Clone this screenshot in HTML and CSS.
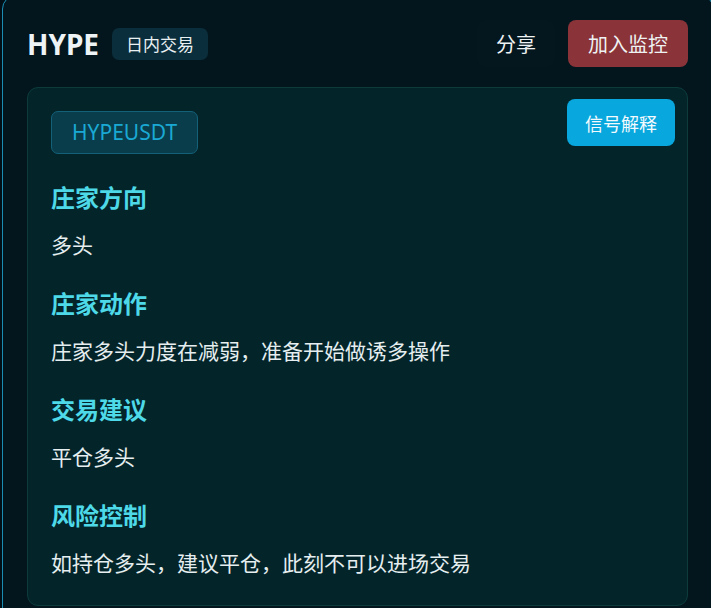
FILE: index.html
```html
<!DOCTYPE html>
<html lang="zh">
<head>
<meta charset="utf-8">
<link rel="stylesheet" href="styles.css">
</head>
<body>
<div class="panel">
  <header class="head">
    <div class="title">
      <span class="coin">HYPE</span>
      <span class="mode">日内交易</span>
    </div>
    <div class="actions">
      <button class="btn share">分享</button>
      <button class="btn watch">加入监控</button>
    </div>
  </header>
  <section class="card">
    <button class="explain">信号解释</button>
    <span class="pair">HYPEUSDT</span>
    <div class="item">
      <h3>庄家方向</h3>
      <p>多头</p>
    </div>
    <div class="item">
      <h3>庄家动作</h3>
      <p>庄家多头力度在减弱，准备开始做诱多操作</p>
    </div>
    <div class="item">
      <h3>交易建议</h3>
      <p>平仓多头</p>
    </div>
    <div class="item">
      <h3>风险控制</h3>
      <p>如持仓多头，建议平仓，此刻不可以进场交易</p>
    </div>
  </section>
</div>
</body>
</html>
```
FILE: styles.css
```css
html, body {
  margin: 0;
  padding: 0;
  overflow: hidden;
  background: #020f16;
  font-family: "Noto Sans", "Noto Sans CJK SC", sans-serif;
}
.panel {
  box-sizing: border-box;
  width: 712px;
  margin: -5px 0 0 2px;
  padding: 24px 25px 40px 24px;
  background: #03161e;
  border: 1.5px solid #1b8db3;
  border-radius: 14px;
}
.head {
  display: flex;
  align-items: center;
  justify-content: space-between;
  height: 47px;
}
.title {
  display: flex;
  align-items: center;
  gap: 13px;
}
.coin {
  font-size: 28px;
  font-weight: 700;
  color: #eef3f5;
  line-height: 1;
}
.mode {
  font-family: "Noto Sans CJK SC", sans-serif;
  font-size: 17px;
  line-height: 32px;
  padding: 0 14px;
  background: #0a2e3b;
  color: #e9f0f2;
  border-radius: 7px;
}
.actions {
  display: flex;
  gap: 13px;
}
.btn {
  font-family: "Noto Sans CJK SC", sans-serif;
  border: none;
  height: 47px;
  border-radius: 8px;
  font-size: 20px;
  color: #eef2f3;
  cursor: pointer;
}
.share {
  background: #04171f;
  width: 78px;
  padding: 0;
}
.watch {
  background: #8a3338;
  width: 120px;
  padding: 0;
}
.card {
  position: relative;
  margin-top: 20px;
  background: #03252a;
  border: 1px solid #0d3b3c;
  border-radius: 11px;
  padding: 23px 23px 27px;
}
.explain {
  position: absolute;
  top: 11px;
  right: 12px;
  width: 108px;
  height: 47px;
  border: none;
  border-radius: 8px;
  background: #08a7de;
  color: #f3fafd;
  font-family: "Noto Sans CJK SC", sans-serif;
  font-size: 18px;
}
.pair {
  display: inline-block;
  box-sizing: border-box;
  height: 43px;
  line-height: 41px;
  padding: 0 20px;
  background: #0a3d4b;
  border: 1px solid #136079;
  border-radius: 7px;
  color: #1aa9d4;
  font-size: 21px;
}
.item h3 {
  margin: 25px 0 0;
  font-family: "Noto Sans CJK SC", sans-serif;
  font-size: 24px;
  line-height: 36px;
  font-weight: 700;
  color: #4ed9e8;
}
.item p {
  margin: 13px 0 0;
  font-family: "Noto Sans CJK SC", sans-serif;
  font-size: 21px;
  line-height: 32px;
  color: #e6eef0;
}
```
